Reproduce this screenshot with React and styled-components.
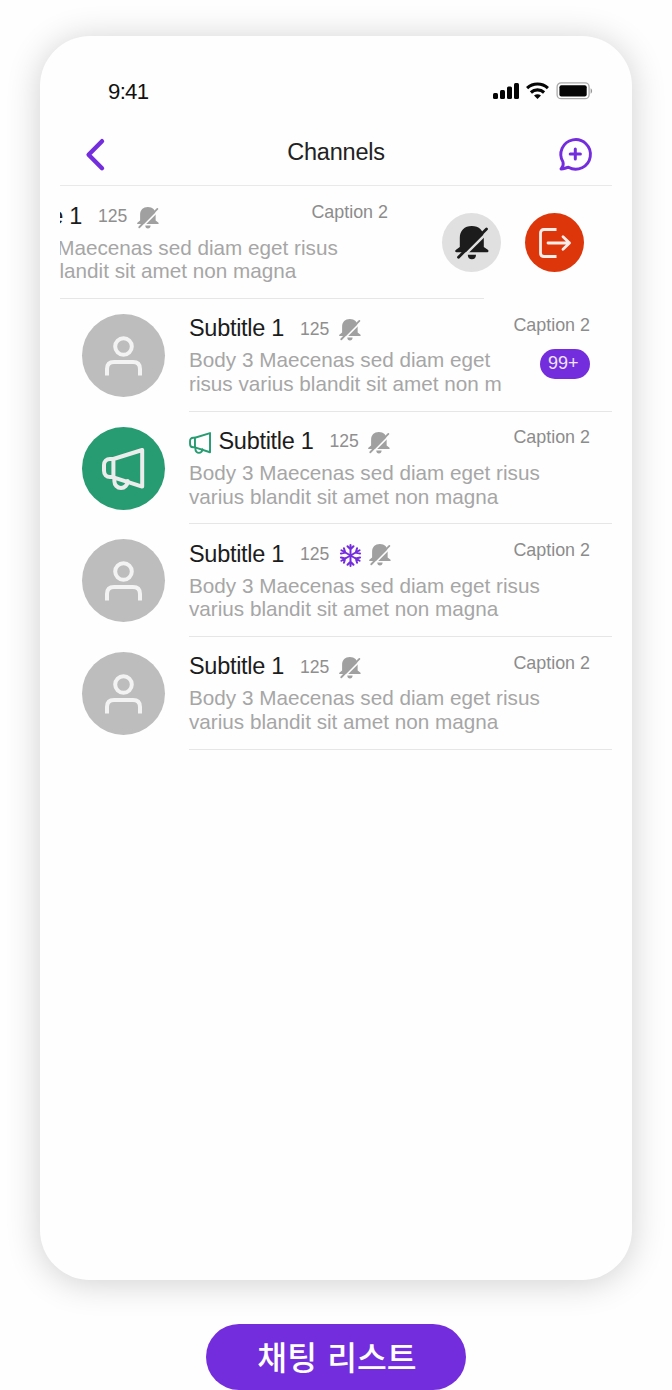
import React from "react";
import styled, { createGlobalStyle } from "styled-components";

const violet = "#742ddd";

const GlobalStyle = createGlobalStyle`
  * { box-sizing: border-box; }
  body {
    margin: 0;
    background: #fefefe;
    font-family: "Liberation Sans", Arial, sans-serif;
  }
  svg { display: block; flex: none; overflow: visible; }
`;

const Page = styled.main`
  display: flex;
  flex-direction: column;
  align-items: center;
  gap: 44px;
  width: 672px;
  height: 1390px;
  padding-top: 36px;
  overflow: hidden;
`;

const Phone = styled.section`
  flex: none;
  width: 592px;
  height: 1244px;
  padding: 0 20px;
  border-radius: 50px;
  background: #fefefe;
  box-shadow: 0 3px 34px rgba(0, 0, 0, 0.19);
`;

const StatusBar = styled.div`
  display: flex;
  align-items: center;
  justify-content: space-between;
  height: 84px;
  padding: 26px 20px 0 48px;
`;

const Time = styled.span`
  padding-top: 2px;
  font-size: 22.2px;
  line-height: 28px;
  letter-spacing: -0.7px;
  color: #111;
`;

const StatusIcons = styled.div`
  display: flex;
  align-items: center;
  gap: 7px;
  padding-bottom: 1px;
`;

const NavBar = styled.header`
  display: flex;
  align-items: center;
  justify-content: space-between;
  height: 66.4px;
  padding: 3px 20px 0 26px;
  border-bottom: 1px solid #e9e9e9;
`;

const Title = styled.h1`
  margin: 0;
  padding: 0 0 5px 8px;
  font-size: 23.5px;
  line-height: 28px;
  font-weight: 400;
  letter-spacing: -0.2px;
  color: #222;
`;

const List = styled.div`
  display: flex;
  flex-direction: column;
`;

const SwipeRow = styled.div`
  display: flex;
  height: 112.7px;
`;

const Clip = styled.div`
  width: 424px;
  overflow: hidden;
  border-bottom: 1px solid #e6e6e6;
`;

const Shifted = styled.div`
  width: 552px;
  margin-left: -202px;
`;

const Actions = styled.div`
  display: flex;
  gap: 24px;
  padding-top: 26.8px;
  margin-left: -42px;
`;

const ActionButton = styled.button`
  display: grid;
  place-items: center;
  width: 59px;
  height: 59px;
  padding: 0;
  border: 0;
  border-radius: 50%;
  background: ${(p) => p.$color};
`;

const Row = styled.article`
  display: flex;
  gap: 24px;
  height: 112.7px;
  padding-left: 22px;
`;

const Avatar = styled.div`
  display: grid;
  place-items: center;
  flex: none;
  width: 83px;
  height: 83px;
  margin-top: 15px;
  border-radius: 50%;
  background: ${(p) => p.$color};
`;

const Content = styled.div`
  display: flex;
  flex: 1;
  justify-content: space-between;
  padding-right: 22px;
  border-bottom: ${(p) => (p.$plain ? "0" : "1px solid #e6e6e6")};
`;

const Copy = styled.div`
  width: 0;
  white-space: nowrap;
`;

const Heading = styled.div`
  display: flex;
  align-items: center;
  height: 28px;
  margin-top: 15.2px;
`;

const Subtitle = styled.h2`
  margin: 0 16px 0 0;
  font-size: 23.5px;
  line-height: 28px;
  font-weight: 400;
  letter-spacing: -0.3px;
  color: #1c1c1c;
`;

const Count = styled.span`
  margin-right: 9.5px;
  padding-top: 1px;
  font-size: 17.6px;
  line-height: 22px;
  color: #8f8f8f;
`;

const HeadingIcons = styled.div`
  display: flex;
  gap: 7px;
  padding-top: 4px;
`;

const Lead = styled.div`
  margin-right: 6.5px;
  padding-top: 4px;
`;

const Body = styled.p`
  margin: 6px 0 0;
  font-size: 20.7px;
  line-height: 23.7px;
  color: #a6a6a6;
`;

const Meta = styled.div`
  display: flex;
  flex-direction: column;
  align-items: flex-end;
  padding-top: 14.5px;
`;

const Caption = styled.span`
  font-size: 17.9px;
  line-height: 22px;
  color: #8c8c8c;
  white-space: nowrap;
`;

const Badge = styled.span`
  width: 50px;
  height: 30px;
  margin-top: 13.8px;
  padding-left: 8px;
  border-radius: 15px;
  background: ${violet};
  color: #eee4fb;
  font-size: 18px;
  line-height: 28px;
`;

const Label = styled.div`
  flex: none;
  width: 260px;
  height: 66px;
  padding-left: 2px;
  border-radius: 33px;
  background: ${violet};
  color: #fff;
  font-family: "Noto Sans CJK KR", sans-serif;
  font-size: 32.4px;
  font-weight: 500;
  line-height: 64px;
  word-spacing: 3px;
  text-align: center;
`;

const BellOff = ({ size = 22, color = "#a0a0a0", bg = "#fefefe" }) => (
  <svg width={size} height={size} viewBox="0.5 0 34 34">
    <path d="M5.3 12C5.3 4.5 10 0 17.3 0s12 4.5 12 12v9l4 2.8c1.3 1 .7 2.4-.5 2.4H2c-1.5 0-1.8-1.5-.5-2.4L5.3 21z" fill={color} />
    <path d="M13.3 28.7h8.2c0 3-1.6 4.6-4.1 4.6s-4.1-1.6-4.1-4.6z" fill={color} />
    <path d="M34 5.3 7 32.3" stroke={bg} strokeWidth="2.5" />
    <path d="M32 2.9 4 31.3" stroke={color} strokeWidth="2.8" strokeLinecap="round" />
  </svg>
);

const Megaphone = ({ size, color, weight }) => (
  <svg width={size} height={size} viewBox="0 0 44 44" fill="none" stroke={color} strokeWidth={weight} strokeLinejoin="round" strokeLinecap="round">
    <path d="M11.4 13 40.2 4v36.6l-28.8-9.2z" />
    <path d="M11.4 13H8c-3.6 0-6 2.5-6 6v5.8c0 3.8 2.4 6.2 6 6.2h3.5" />
    <path d="M12.4 32.1v3.2a6.6 6.6 0 0 0 13.2 0v-.3" />
  </svg>
);

const Person = () => (
  <svg width="37" height="40" viewBox="0 0 37 40" fill="none" stroke="#f3f3f3" strokeWidth="4">
    <circle cx="18.5" cy="10.5" r="8.3" />
    <path d="M2 39.5V33q0-7 7-7h19q7 0 7 7v6.5" strokeLinecap="butt" />
  </svg>
);

const Snowflake = () => (
  <svg width="23" height="23" viewBox="0 0 23 23" fill="none" stroke={violet} strokeWidth="2" strokeLinecap="round">
    {[0, 60, 120, 180, 240, 300].map((a) => (
      <path key={a} transform={`rotate(${a} 11.5 11.5)`} d="M11.5 11.5V1M8.5 2.2l3 3.2 3-3.2" />
    ))}
  </svg>
);

const Leave = () => (
  <svg width="32" height="30" viewBox="0 0 32 30" fill="none" stroke="#f7eeea" strokeWidth="2.8" strokeLinecap="round" strokeLinejoin="round">
    <path d="M17.5 1.5H5q-3.5 0-3.5 3.5v20q0 3.5 3.5 3.5h12.5" strokeLinecap="butt" />
    <path d="M9 15h21.5M24 8.8l6.5 6.2-6.5 6.2" />
  </svg>
);

const Signal = () => (
  <svg width="26" height="16" viewBox="0 0 26 16" fill="#050505">
    <rect x="0" y="10" width="5" height="6" rx="1.5" />
    <rect x="7" y="7" width="5" height="9" rx="1.5" />
    <rect x="14" y="3.5" width="5" height="12.5" rx="1.5" />
    <rect x="21" y="0" width="5" height="16" rx="1.5" />
  </svg>
);

const Wifi = () => (
  <svg width="23" height="16" viewBox="0 0 23 16" fill="none" stroke="#050505" strokeWidth="3.1">
    <path d="M1.1 5.1a15.3 15.3 0 0 1 20.8 0" />
    <path d="M4.9 9.5a9.7 9.7 0 0 1 13.2 0" />
    <path d="M8 12.5q3.5-2.6 7 0L11.5 16z" fill="#050505" stroke="none" />
  </svg>
);

const Battery = () => (
  <svg width="36" height="18" viewBox="-0.4 0 36 18">
    <rect x=".7" y=".9" width="32" height="15.8" rx="4" fill="none" stroke="#aaa" strokeWidth="1.3" />
    <rect x="3" y="3.2" width="27.3" height="11.2" rx="2" fill="#050505" />
    <path d="M34.2 6.3c2 1 2 4.4 0 5.4z" fill="#999" />
  </svg>
);

const Back = () => (
  <svg width="19" height="32" viewBox="0.6 0 19 32" fill="none" stroke={violet} strokeWidth="4.4" strokeLinecap="round" strokeLinejoin="round">
    <path d="M16.6 3.2 3.2 16.8 16.6 30.2" />
  </svg>
);

const NewChat = () => (
  <svg width="33" height="34" viewBox="0 -0.5 33 34" fill="none" stroke={violet} strokeWidth="2.9" strokeLinecap="round" strokeLinejoin="round">
    <path d="M4 24.6A14.8 14.8 0 1 1 9.4 29.8C7.2 30.2 4.8 31.4 2 31.5C3.5 29.6 5 28.2 4 24.6z" />
    <path d="M16.3 11.4v10.2M11.2 16.5h10.2" strokeWidth="3" />
  </svg>
);

const channels = [
  { lines: ["Body 3 Maecenas sed diam eget", "risus varius blandit sit amet non m"], badge: "99+" },
  { lines: ["Body 3 Maecenas sed diam eget risus", "varius blandit sit amet non magna"], broadcast: true },
  { lines: ["Body 3 Maecenas sed diam eget risus", "varius blandit sit amet non magna"], frozen: true },
  { lines: ["Body 3 Maecenas sed diam eget risus", "varius blandit sit amet non magna"] },
];

function Channel({ lines, badge, broadcast, frozen, plain }) {
  return (
    <Row>
      <Avatar $color={broadcast ? "#279c72" : "#bdbdbd"}>
        {broadcast ? <Megaphone size={44} color="#ececec" weight={4} /> : <Person />}
      </Avatar>
      <Content $plain={plain}>
        <Copy>
          <Heading>
            {broadcast && (
              <Lead>
                <Megaphone size={23} color="#279c72" weight={3.7} />
              </Lead>
            )}
            <Subtitle>Subtitle 1</Subtitle>
            <Count>125</Count>
            <HeadingIcons>
              {frozen && <Snowflake />}
              <BellOff />
            </HeadingIcons>
          </Heading>
          <Body>
            {lines[0]}
            <br />
            {lines[1]}
          </Body>
        </Copy>
        <Meta>
          <Caption>Caption 2</Caption>
          {badge && <Badge>{badge}</Badge>}
        </Meta>
      </Content>
    </Row>
  );
}

export default function App() {
  return (
    <>
      <GlobalStyle />
      <Page>
        <Phone>
          <StatusBar>
            <Time>9:41</Time>
            <StatusIcons>
              <Signal />
              <Wifi />
              <Battery />
            </StatusIcons>
          </StatusBar>
          <NavBar>
            <Back />
            <Title>Channels</Title>
            <NewChat />
          </NavBar>
          <List>
            <SwipeRow>
              <Clip>
                <Shifted>
                  <Channel lines={channels[1].lines} plain />
                </Shifted>
              </Clip>
              <Actions>
                <ActionButton $color="#e0e0e0" aria-label="Mute">
                  <BellOff size={34} color="#1c1c1c" bg="#e0e0e0" />
                </ActionButton>
                <ActionButton $color="#de360b" aria-label="Leave">
                  <Leave />
                </ActionButton>
              </Actions>
            </SwipeRow>
            {channels.map((c, i) => (
              <Channel key={i} {...c} />
            ))}
          </List>
        </Phone>
        <Label>채팅 리스트</Label>
      </Page>
    </>
  );
}
